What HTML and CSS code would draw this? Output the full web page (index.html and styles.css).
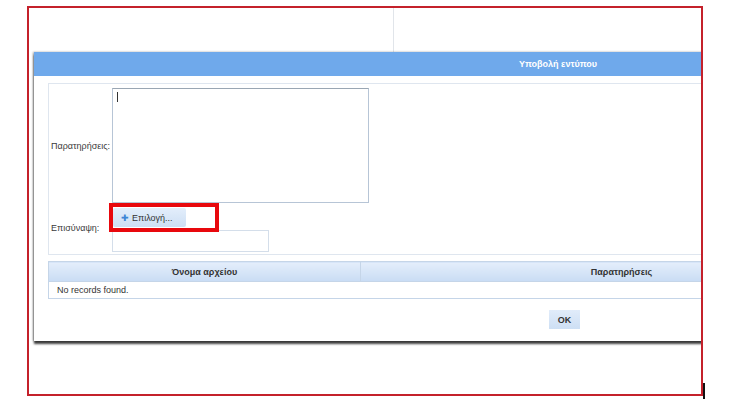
FILE: index.html
```html
<!DOCTYPE html>
<html lang="el">
<head>
    <meta charset="UTF-8">
    <meta name="viewport" content="width=device-width, initial-scale=1.0">
    <title>Υποβολή εντύπου</title>
    <link rel="stylesheet" href="styles.css">
</head>
<body>
    <div class="screen">
        <div class="frame">
            <div class="backdrop">
                <div class="backdrop-col"></div>
            </div>
            <div class="dialog">
                <div class="dialog-title">Υποβολή εντύπου</div>
                <div class="dialog-body">
                    <div class="panel">
                        <label class="field-label" for="notes">Παρατηρήσεις:</label>
                        <div class="notes-wrap">
                            <textarea id="notes" class="notes"></textarea>
                            <span class="caret"></span>
                        </div>

                        <label class="field-label attach-label">Επισύναψη:</label>
                        <div class="attach">
                            <div class="choose-wrap">
                                <button class="choose-btn"><span class="plus">✚</span>Επιλογή...</button>
                                <div class="highlight"></div>
                            </div>
                            <div class="file-box"></div>
                        </div>
                    </div>

                    <table class="files">
                        <thead>
                            <tr>
                                <th class="col-name">Όνομα αρχείου</th>
                                <th>Παρατηρήσεις</th>
                            </tr>
                        </thead>
                        <tbody>
                            <tr>
                                <td colspan="2">No records found.</td>
                            </tr>
                        </tbody>
                    </table>

                    <div class="actions">
                        <button class="ok-btn">OK</button>
                    </div>
                </div>
            </div>
        </div>
        <div class="cursor-bar"></div>
    </div>
</body>
</html>
```

FILE: styles.css
```css
body {
    margin: 0;
    padding: 0;
    background: #fff;
    font-family: "Liberation Sans", Arial, sans-serif;
    color: #333;
}
.screen {
    display: flex;
    height: 399px;
    overflow: hidden;
}
.frame {
    margin-top: 6px;
    margin-left: 27px;
    width: 672px;
    height: 386px;
    border: 2px solid #c4212b;
    overflow: hidden;
}
.cursor-bar {
    align-self: flex-end;
    width: 2px;
    height: 16px;
    background: #111;
}
.backdrop {
    height: 44px;
}
.backdrop-col {
    width: 364px;
    height: 100%;
    border-right: 1px solid #e1e5ea;
}
.dialog {
    margin-left: 5px;
    width: 1048px;
    background: #fff;
    box-shadow: 0 3px 2px rgba(0, 0, 0, 0.75), -1px 0 2px rgba(0, 0, 0, 0.35);
}
.dialog-title {
    height: 24px;
    line-height: 24px;
    background: #6fa9eb;
    color: #fff;
    font-size: 9px;
    font-weight: bold;
    text-align: center;
}
.dialog-body {
    padding: 7px 0 12px 14px;
}
.panel {
    display: grid;
    grid-template-columns: 61px 300px;
    padding: 4px 0 2px 2px;
    border: 1px solid #dfe6ef;
    margin-right: 150px;
}
.field-label {
    align-self: center;
    font-size: 9px;
    color: #3a3a3a;
}
.notes-wrap {
    position: relative;
    height: 115px;
}
.notes {
    width: 257px;
    height: 115px;
    box-sizing: border-box;
    margin: 0;
    border: 1px solid #b7c5d6;
    border-top-color: #9aa6b3;
    resize: none;
}
.caret {
    position: absolute;
    left: 5px;
    top: 4px;
    width: 1px;
    height: 10px;
    background: #333;
}
.attach {
    display: flex;
    flex-direction: column;
    align-items: flex-start;
}
.choose-wrap {
    position: relative;
    margin-top: 5px;
    margin-left: 1px;
}
.choose-btn {
    display: flex;
    align-items: center;
    gap: 3px;
    height: 19px;
    width: 73px;
    padding: 0 0 0 8px;
    border: none;
    border-radius: 2px;
    background: linear-gradient(#e3eefb, #cddff4);
    font-family: inherit;
    font-size: 9px;
    color: #333;
}
.plus {
    color: #3d86d6;
    font-size: 9px;
}
.highlight {
    position: absolute;
    left: -4px;
    top: -5px;
    width: 102px;
    height: 21px;
    border: 4px solid #e8080d;
}
.file-box {
    margin-top: 3px;
    width: 157px;
    height: 22px;
    box-sizing: border-box;
    border: 1px solid #d4deea;
}
.files {
    margin-top: 6px;
    width: 835px;
    border-collapse: collapse;
    border: 1px solid #c5d5e8;
    font-size: 9px;
}
.files th {
    height: 19px;
    padding: 0;
    background: linear-gradient(#e4eefb, #c9dcf4);
    font-weight: bold;
    color: #333;
    border-left: 1px solid #c5d5e8;
}
.files .col-name {
    width: 311px;
}
.files td {
    height: 16px;
    padding: 0 0 0 8px;
    border-top: 1px solid #c5d5e8;
}
.actions {
    display: flex;
    margin-top: 11px;
    padding-left: 501px;
}
.ok-btn {
    width: 31px;
    height: 19px;
    padding: 0;
    border: none;
    background: linear-gradient(#e1ecfa, #cddff4);
    font-family: inherit;
    font-size: 9px;
    font-weight: bold;
    color: #333;
}
```
